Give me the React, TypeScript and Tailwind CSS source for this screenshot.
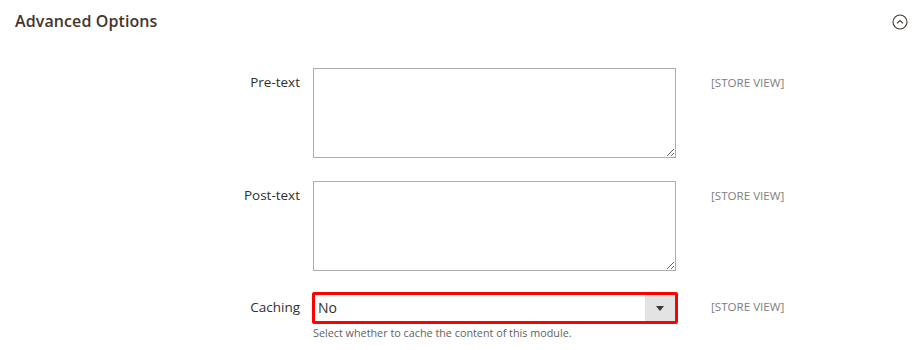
export default function App() {
  const storeView = (
    <span className="ml-[35px] pt-[7px] text-[11.6px] leading-[16px] text-[#808080]">[STORE VIEW]</span>
  )

  return (
    <div className="w-[922px] h-[350px] bg-white font-['Open_Sans',sans-serif] overflow-hidden">
      {/* header */}
      <div className="flex items-center justify-between h-[42px] pl-[15px] pr-[15px]">
        <h2 className="text-[16px] font-semibold text-[#41362f] tracking-[0.1px]">Advanced Options</h2>
        <svg width="16" height="16" viewBox="0 0 16 16" className="mt-[2px] mr-[-1px]">
          <circle cx="8" cy="8" r="7" fill="none" stroke="#41362f" strokeWidth="1.1" />
          <path d="M5 9.3 L8 6.5 L11 9.3" fill="none" stroke="#41362f" strokeWidth="1.1" />
        </svg>
      </div>

      {/* Pre-text */}
      <div className="flex items-start mt-[26px]">
        <label className="w-[300px] text-right pt-[5px] text-[13.5px] leading-[19px] text-[#303030]">Pre-text</label>
        <textarea className="ml-[13px] w-[363px] h-[90px] border border-[#adadad] bg-white" />
        {storeView}
      </div>

      {/* Post-text */}
      <div className="flex items-start mt-[23px]">
        <label className="w-[300px] text-right pt-[5px] text-[13.5px] leading-[19px] text-[#303030]">Post-text</label>
        <textarea className="ml-[13px] w-[363px] h-[90px] border border-[#adadad] bg-white" />
        {storeView}
      </div>

      {/* Caching */}
      <div className="flex items-start mt-[21px]">
        <label className="w-[300px] text-right pt-[6px] text-[13.5px] leading-[19px] text-[#303030]">Caching</label>
        <div className="ml-[12px] flex flex-col">
          <div className="w-[366px] h-[32px] border-[3px] border-[#ff0000] rounded-[2px] flex items-stretch bg-white">
            <span className="flex-1 pl-[3px] text-[14px] leading-[26px] text-[#303030]">No</span>
            <span className="w-[30px] bg-[#e3e3e3] flex items-center justify-center">
              <svg width="8" height="5" viewBox="0 0 8 5">
                <path d="M0 0 L8 0 L4 5 Z" fill="#41362f" />
              </svg>
            </span>
          </div>
          <span className="ml-[1px] mt-[1px] text-[10.8px] leading-[16px] text-[#5f5f5f]">Select whether to cache the content of this module.</span>
        </div>
        <span className="ml-[33px] pt-[7px] text-[11.6px] leading-[16px] text-[#808080]">[STORE VIEW]</span>
      </div>
    </div>
  )
}
